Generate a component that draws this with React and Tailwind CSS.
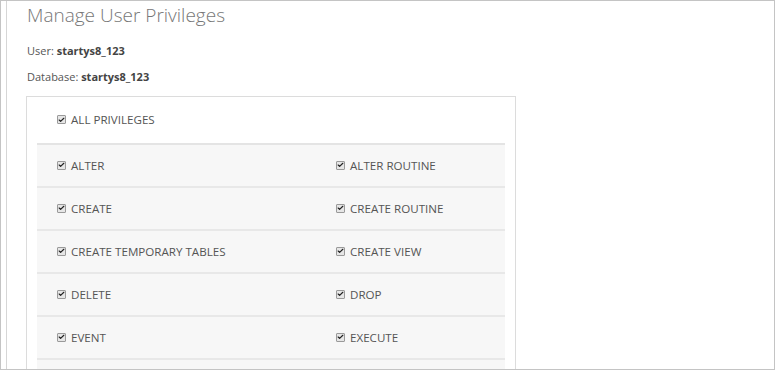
import { Check } from 'lucide-react';

const rows = [
  ['ALTER', 'ALTER ROUTINE'],
  ['CREATE', 'CREATE ROUTINE'],
  ['CREATE TEMPORARY TABLES', 'CREATE VIEW'],
  ['DELETE', 'DROP'],
  ['EVENT', 'EXECUTE'],
];

// small checked checkbox like the browser default
function Box() {
  return (
    <span className="inline-flex items-center justify-center w-[9px] h-[9px] border border-[#9a9a9a] bg-[#e6e6e6] rounded-[1px] mr-[5px] shrink-0">
      <Check size={8} strokeWidth={4} className="text-[#222]" />
    </span>
  );
}

function Priv({ label }) {
  return (
    <div className="flex items-center text-[11.6px] text-[#555]">
      <Box />
      <span>{label}</span>
    </div>
  );
}

export default function App() {
  return (
    <div
      className="w-[775px] h-[370px] overflow-hidden bg-white border border-[#c4c4c4] flex"
      style={{ fontFamily: '"Open Sans", sans-serif' }}
    >
      <div className="w-[6px] border-r border-[#d6d6d6] shrink-0" />
      <div className="flex-1 pl-[19px]">
        <h1 className="pl-[1px] text-[19px] font-light text-[#777] leading-[28px]">
          Manage User Privileges
        </h1>
        <p className="pl-[1px] mt-[14px] text-[11px] text-[#555] leading-[15px]">
          User: <b className="font-bold text-[#444]">startys8_123</b>
        </p>
        <p className="pl-[1px] mt-[11px] text-[11px] text-[#555] leading-[15px]">
          Database: <b className="font-bold text-[#444]">startys8_123</b>
        </p>
        <div className="mt-[12px] w-[490px] border border-[#dcdcdc] px-[10px]">
          <div className="h-[46px] pl-[20px] flex items-center">
            <Priv label="ALL PRIVILEGES" />
          </div>
          <div className="border-t-2 border-[#e4e4e4] bg-[#f7f7f7]">
            {rows.map(([a, b]) => (
              <div key={a} className="grid grid-cols-[279px_1fr] h-[43px] border-b-2 border-[#e8e8e8]">
                <div className="pl-[20px] flex items-center">
                  <Priv label={a} />
                </div>
                <div className="pl-[20px] flex items-center">
                  <Priv label={b} />
                </div>
              </div>
            ))}
            <div className="h-[43px]" />
          </div>
        </div>
      </div>
    </div>
  );
}
